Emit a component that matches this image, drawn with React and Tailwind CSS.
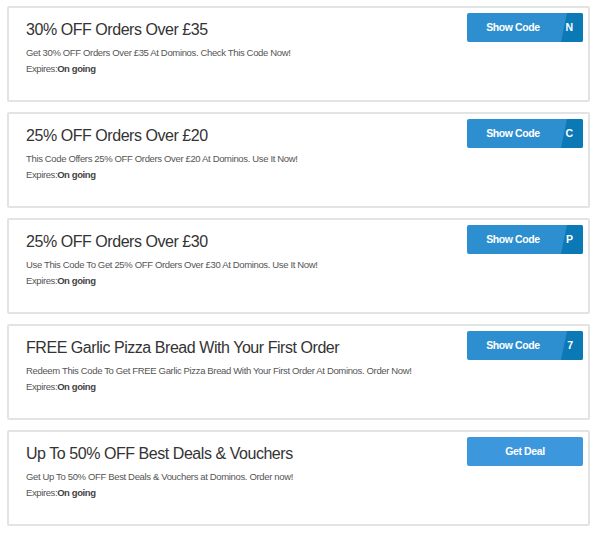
const items = [
  { t: "30% OFF Orders Over £35", d: "Get 30% OFF Orders Over £35 At Dominos. Check This Code Now!", code: "N" },
  { t: "25% OFF Orders Over £20", d: "This Code Offers 25% OFF Orders Over £20 At Dominos. Use It Now!", code: "C" },
  { t: "25% OFF Orders Over £30", d: "Use This Code To Get 25% OFF Orders Over £30 At Dominos. Use It Now!", code: "P" },
  { t: "FREE Garlic Pizza Bread With Your First Order", d: "Redeem This Code To Get FREE Garlic Pizza Bread With Your First Order At Dominos. Order Now!", code: "7" },
  { t: "Up To 50% OFF Best Deals & Vouchers", d: "Get Up To 50% OFF Best Deals & Vouchers at Dominos. Order now!", code: null },
];

export default function App() {
  return (
    <div className="w-[600px] h-[534px] bg-white pt-[6px] pl-[7px] flex flex-col gap-[10px]" style={{ fontFamily: '"Liberation Sans", Arial, sans-serif' }}>
      {items.map((it, i) => (
        <div key={i} className="w-[583px] h-[96px] border-2 border-[#e3e3e3] rounded-[2px] flex justify-between pl-[17px] pr-[5px] pt-[5px]">
          <div className="pt-[7px]">
            <div className="text-[16px] leading-[20px] tracking-[-0.45px] text-[#333]">{it.t}</div>
            <div className="mt-[7px] text-[9.5px] leading-[12px] tracking-[-0.35px] text-[#555]">{it.d}</div>
            <div className="mt-[4px] text-[9.5px] leading-[12px] tracking-[-0.4px] text-[#555]">
              Expires:<span className="font-bold text-[#444]">On going</span>
            </div>
          </div>
          {it.code ? (
            <div className="relative w-[116px] h-[29px] rounded-[2px] bg-[#2d8fd0] overflow-hidden flex items-center text-white text-[10.5px] tracking-[-0.4px] font-bold shrink-0">
              <span className="w-[92px] text-center">Show Code</span>
              <div className="absolute right-0 top-0 h-full w-[22px] bg-[#0b79b6] [clip-path:polygon(6px_0,100%_0,100%_100%,0_100%)]"></div>
              <span className="absolute right-[10px] top-[7px] tracking-normal">{it.code}</span>
            </div>
          ) : (
            <div className="w-[116px] h-[29px] rounded-[2px] bg-[#3d97dc] flex items-center justify-center text-white text-[10.5px] tracking-[-0.4px] font-bold shrink-0">
              Get Deal
            </div>
          )}
        </div>
      ))}
    </div>
  );
}
